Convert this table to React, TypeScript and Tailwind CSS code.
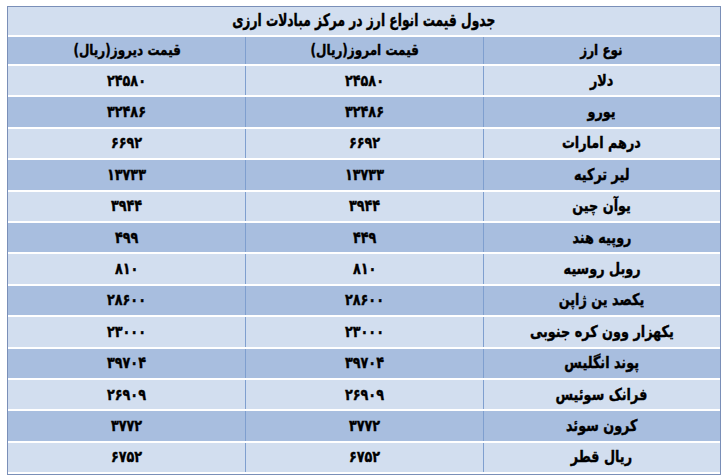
import React from "react";

type Row = { name: string; today: string; yesterday: string };

const rows: Row[] = [
  { name: "دلار", today: "۲۴۵۸۰", yesterday: "۲۴۵۸۰" },
  { name: "یورو", today: "۳۲۴۸۶", yesterday: "۳۲۴۸۶" },
  { name: "درهم امارات", today: "۶۶۹۲", yesterday: "۶۶۹۲" },
  { name: "لیر ترکیه", today: "۱۳۷۳۳", yesterday: "۱۳۷۳۳" },
  { name: "یوآن چین", today: "۳۹۴۴", yesterday: "۳۹۴۴" },
  { name: "روپیه هند", today: "۴۴۹", yesterday: "۴۹۹" },
  { name: "روبل روسیه", today: "۸۱۰", yesterday: "۸۱۰" },
  { name: "یکصد ین ژاپن", today: "۲۸۶۰۰", yesterday: "۲۸۶۰۰" },
  { name: "یکهزار وون کره جنوبی", today: "۲۳۰۰۰", yesterday: "۲۳۰۰۰" },
  { name: "پوند انگلیس", today: "۳۹۷۰۴", yesterday: "۳۹۷۰۴" },
  { name: "فرانک سوئیس", today: "۲۶۹۰۹", yesterday: "۲۶۹۰۹" },
  { name: "کرون سوئد", today: "۳۷۷۲", yesterday: "۳۷۷۲" },
  { name: "ریال قطر", today: "۶۷۵۲", yesterday: "۶۷۵۲" },
];

function Cell({ children, last }: { children: React.ReactNode; last?: boolean }) {
  return (
    <div
      className={
        "flex items-center justify-center " +
        (last ? "" : "border-l border-[#7f9fcf]")
      }
    >
      <span className="inline-block scale-x-[0.8] whitespace-nowrap">{children}</span>
    </div>
  );
}

export default function App() {
  return (
    <div className="w-[727px] h-[476px] bg-white pt-[6px] pl-[7px] overflow-hidden">
      <div
        dir="rtl"
        className="w-[714px] border border-[#7a8fb8] text-black font-bold [-webkit-text-stroke:0.4px_black]"
        style={{ fontFamily: '"DejaVu Sans", sans-serif' }}
      >
        <div className="h-[30px] bg-[#d2deef] border-b-2 border-white flex items-center justify-center text-[17px]">
          <span className="inline-block scale-x-[0.72] whitespace-nowrap">
            جدول قیمت انواع ارز در مرکز مبادلات ارزی
          </span>
        </div>
        <div className="h-[29px] bg-[#a8bedf] border-b-2 border-white grid grid-cols-3 text-[15px]">
          <Cell>نوع ارز</Cell>
          <Cell>قیمت امروز(ریال)</Cell>
          <Cell last>قیمت دیروز(ریال)</Cell>
        </div>
        {rows.map((r, i) => (
          <div
            key={r.name}
            className={
              "h-[31.4px] grid grid-cols-3 text-[16px] border-b-2 border-white " +
              (i % 2 === 0 ? "bg-[#d2deef]" : "bg-[#a8bedf]")
            }
          >
            <Cell>{r.name}</Cell>
            <Cell>{r.today}</Cell>
            <Cell last>{r.yesterday}</Cell>
          </div>
        ))}
      </div>
    </div>
  );
}
